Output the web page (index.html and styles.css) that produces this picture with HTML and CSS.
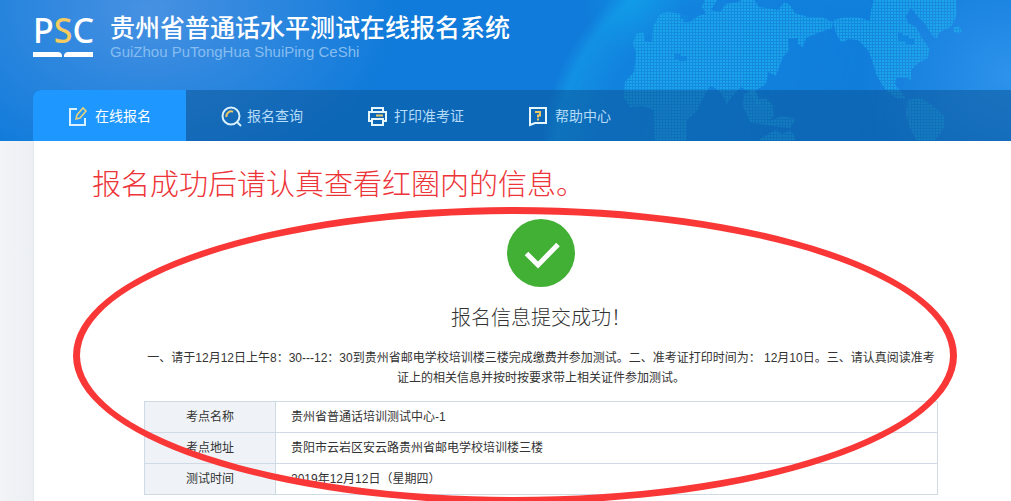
FILE: index.html
```html
<!DOCTYPE html>
<html lang="zh-CN">
	<head>
		<meta charset="utf-8">
		<title>贵州省普通话水平测试在线报名系统</title>
		<link rel="stylesheet" href="styles.css">
	</head>
	<body>
		<header class="header">
			<!-- 地球背景 -->
			<svg class="globe" width="491" height="141" viewBox="520 0 491 141" aria-hidden="true">
				<defs>
					<pattern id="dots" width="3" height="3" patternUnits="userSpaceOnUse">
						<rect width="3" height="3" fill="#1aa3ea" opacity=".3"/>
						<rect width="2" height="2" fill="#1fb4ef" opacity=".6"/>
					</pattern>
					<radialGradient id="ball" gradientUnits="userSpaceOnUse" cx="762" cy="160" r="222">
						<stop offset="0" stop-color="#19a4ef" stop-opacity=".12"/>
						<stop offset=".75" stop-color="#19a4ef" stop-opacity=".2"/>
						<stop offset=".93" stop-color="#14a8ee" stop-opacity=".5"/>
						<stop offset="1" stop-color="#19a4ef" stop-opacity="0"/>
					</radialGradient>
					<linearGradient id="fade" x1="0" x2="1">
						<stop offset="0" stop-color="#fff"/>
						<stop offset=".4" stop-color="#fff"/>
						<stop offset=".85" stop-color="#000"/>
					</linearGradient>
					<mask id="left">
						<rect x="520" y="0" width="491" height="141" fill="url(#fade)"/>
					</mask>
					<radialGradient id="glow" gradientUnits="userSpaceOnUse" cx="632" cy="0" r="50">
						<stop offset="0" stop-color="#0fb4f2" stop-opacity=".3"/>
						<stop offset="1" stop-color="#0fb4f2" stop-opacity="0"/>
					</radialGradient>
				</defs>
				<circle cx="762" cy="160" r="222" fill="url(#ball)" mask="url(#left)"/>
				<rect x="570" y="0" width="130" height="70" fill="url(#glow)"/>
				<g fill="url(#dots)">
					<path d="M633 43L636 34L643 32L645 41L652 42L653 27L660 14L668 12L682 14L684 22L690 22L698 16L706 14L702 7L705 0L717 0L711 10L720 12L726 4L738 2L742 0L754 0L759 7L778 10L784 3L789 4L795 13L808 17L822 17L833 22L832 28L818 33L806 38L803 47L798 44L798 38L788 39L789 50L783 57L776 76L768 72L766 84L756 90L758 96L762 108L756 103L750 92L745 90L741 87L736 92L732 96L727 104L722 94L715 88L710 86L704 96L696 112L687 120L686 141L655 141L654 110L642 106L630 107L624 98L625 82L634 72L636 54Z"/>
					<path d="M744 94L754 90L756 100L765 98L772 104L774 116L768 121L782 116L796 119L790 128L772 126L760 124L750 122L746 112L742 106Z"/>
					<path d="M760 139L768 134L776 130L782 134L790 130L795 136V141H760Z"/>
					<path d="M833 20L845 17L858 17L870 21L871 10L874 0L956 0L957 15L951 27L940 32L936 39L931 34L925 24L918 17L911 8L906 16L908 23L916 27L922 38L929 48L928 58L917 64L911 70L911 80L907 78L896 78L895 84L901 92L906 99L897 98L888 92L883 86L877 76L872 60L868 50L858 40L848 39L842 43L836 34Z"/>
					<path d="M908 100L920 98L932 105L944 116L944 128L934 141L917 141L910 128L906 114Z"/>
					<path d="M953 28L958 26L962 30L960 34L954 32Z"/>
				</g>
				<g fill="#1287df">
					<path d="M674 54H681V56H687V61H679V59H674Z"/>
					<path d="M898 33H903V36H909V39H914V44H906V41H898Z"/>
					<path d="M680 15H688V21H684V19H680Z"/>
				</g>
			</svg>

			<div class="brand">
				<div class="logo">
					<div class="logo-text">P<span>S</span>C</div>
					<svg width="60" height="6" viewBox="0 0 60 6" aria-hidden="true">
						<path d="M0 1H25Q28 1 29 4V6H0Z M60 1H35Q32 1 31 4V6H60Z" fill="#fff"/>
					</svg>
				</div>
				<div>
					<h1 class="title">贵州省普通话水平测试在线报名系统</h1>
					<p class="subtitle">GuiZhou PuTongHua ShuiPing CeShi</p>
				</div>
			</div>

			<nav class="nav">
				<a class="nav-link active" href="#">
					<svg width="24" height="24" viewBox="0 0 24 24" fill="none" stroke-width="2">
						<path d="M11 5H4V21H19V14" stroke="#d9f0ff"/>
						<path d="M10 15L11 11L17 4L20 7L14 14Z" stroke="#e5d27a" stroke-width="1.6"/>
					</svg>
					在线报名
				</a>
				<a class="nav-link" href="#">
					<svg width="24" height="24" viewBox="0 0 24 24" fill="none" stroke-width="2">
						<circle cx="13" cy="12" r="8.5" stroke="#d9f0ff"/>
						<path d="M19 18L23 22" stroke="#d9f0ff"/>
						<path d="M8.500 13A4.800 4.800 0 0 1 15 7.700" stroke="#ecc967"/>
					</svg>
					报名查询
				</a>
				<a class="nav-link" href="#">
					<svg width="24" height="24" viewBox="0 0 24 24" fill="none" stroke="#e6f6ff" stroke-width="2">
						<path d="M7 8V4H18V8M7 17H4V8H21V17H18"/>
						<rect x="7" y="15" width="11" height="6"/>
						<path d="M11 11.500H18" stroke="#ecc967"/>
					</svg>
					打印准考证
				</a>
				<a class="nav-link" href="#">
					<svg width="24" height="24" viewBox="0 0 24 24" fill="none" stroke-width="2">
						<path d="M4 4H20V19H9L4 21Z" stroke="#e6f6ff"/>
						<path d="M9 8H14V11.500H12V13.500M12 14.500V16.500" stroke="#ecc967"/>
					</svg>
					帮助中心
				</a>
			</nav>
		</header>

		<main class="main">
			<p class="note">报名成功后请认真查看红圈内的信息。</p>

			<section class="result">
				<svg class="ok" width="68" height="68" viewBox="0 0 68 68" aria-hidden="true">
					<circle cx="34" cy="34" r="34" fill="#42af35"/>
					<path d="M19.500 34.500L31 46L51 25.500" fill="none" stroke="#fff" stroke-width="5"/>
				</svg>
				<h2 class="result-title">报名信息提交成功！</h2>
				<p class="tips">一、请于12月12日上午8：30---12：30到贵州省邮电学校培训楼三楼完成缴费并参加测试。二、准考证打印时间为： 12月10日。三、请认真阅读准考证上的相关信息并按时按要求带上相关证件参加测试。</p>
				<table class="info">
					<tr>
						<th scope="row">考点名称</th>
						<td>贵州省普通话培训测试中心-1</td>
					</tr>
					<tr>
						<th scope="row">考点地址</th>
						<td>贵阳市云岩区安云路贵州省邮电学校培训楼三楼</td>
					</tr>
					<tr>
						<th scope="row">测试时间</th>
						<td>2019年12月12日（星期四）</td>
					</tr>
				</table>
				<!-- 红圈 -->
				<div class="ring"></div>
			</section>
		</main>
	</body>
</html>
```
FILE: styles.css
```css
* {box-sizing: border-box;}
body,h1,h2,p {margin: 0;padding: 0;font-weight: normal;}
body {
	display: flex;
	flex-direction: column;
	min-height: 100vh;
	background: linear-gradient(90deg, #f2f4f7, #eceff4 33px);
	color: #333;
	font: 12px/20px "Liberation Sans", "Noto Sans CJK SC", sans-serif;
}

/* 头部 */
.header {
	position: relative;
	overflow: hidden;
	padding-left: 33px;
	background:
		radial-gradient(ellipse 250px 170px at 150px 10px, #4791e2, rgba(71, 145, 226, 0)),
		radial-gradient(ellipse 150px 130px at 100% 75px, #2d93ec, rgba(45, 147, 236, 0)),
		#107bda;
}
.globe {position: absolute;top: 0;right: 0;}
.brand {position: relative;display: flex;gap: 17px;height: 90px;padding-top: 12px;color: #fff;}
.logo {width: 60px;}
.logo svg {display: block;}
.logo-text {height: 39px;font: 500 34px/37px "Noto Sans", sans-serif;}
.logo-text span {color: #f5cb62;}
.title {font-size: 25px;line-height: 32px;font-weight: 500;}
.subtitle {font-size: 15px;line-height: 16px;color: #86bdf0;}

/* 导航 */
.nav {position: relative;display: flex;height: 51px;border-radius: 8px 0 0 0;background: rgba(11, 82, 145, .48);overflow: hidden;}
.nav-link {display: flex;align-items: center;gap: 5px;padding: 0 31px;color: #b5dcf8;font-size: 14px;text-decoration: none;white-space: nowrap;}
.nav-link.active {padding: 0 35px 0 33px;margin-right: 1px;background: #1e98ff;color: #fff;}

/* 内容 */
.main {flex: 1;margin-left: 33px;padding: 24px 73px 5px 58px;overflow: hidden;border-left: 1px solid #e4e8ed;background: #fff;}
.note {color: #ed3438;font-size: 29px;line-height: 40px;font-weight: 300;}
.result {position: relative;margin: 14px 0 0 52px;text-align: center;}
.ok {display: block;margin: 0 auto;}
.result-title {margin-top: 16px;font-size: 20px;line-height: 30px;font-weight: 300;}
.tips {margin-top: 15px;}
.info {width: 100%;margin-top: 13px;border-collapse: collapse;}
.info th,.info td {height: 31px;padding: 0 15px;border: 1px solid #d0dae5;font-weight: normal;text-align: left;}
.info th {width: 131px;background: #eff3f8;text-align: center;}
.ring {position: absolute;top: -12px;right: -19px;bottom: -9px;left: -71px;border: 7px solid #fa3737;border-radius: 50%;pointer-events: none;}
```
